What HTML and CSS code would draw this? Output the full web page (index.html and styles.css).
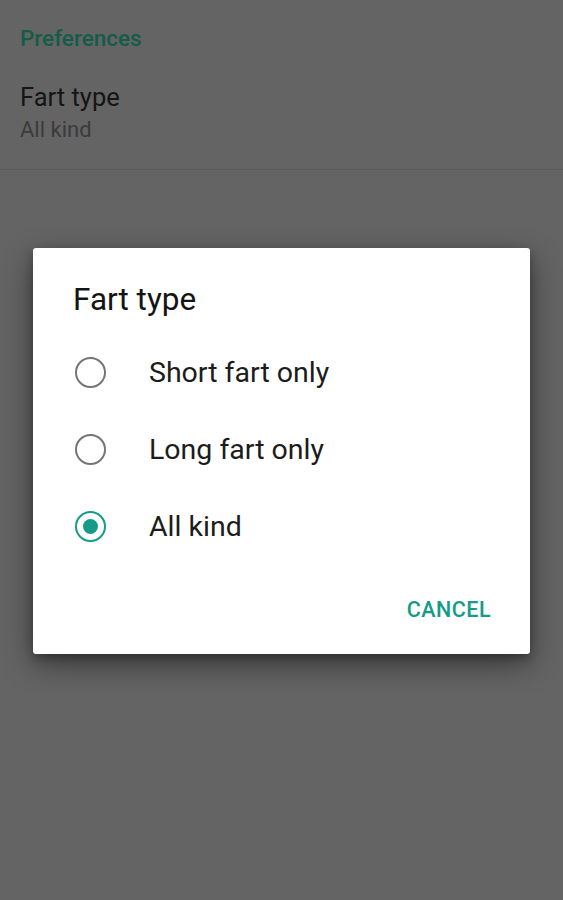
FILE: index.html
```html
<!DOCTYPE html>
<html>
<head>
<meta charset="utf-8">
<link rel="stylesheet" href="styles.css">
</head>
<body>
<div class="screen">
  <div class="category">Preferences</div>
  <div class="pref">
    <div class="pref-title">Fart type</div>
    <div class="pref-summary">All kind</div>
  </div>
  <div class="divider"></div>
</div>
<div class="scrim">
  <div class="dialog">
    <div class="dialog-title">Fart type</div>
    <div class="options">
      <div class="option">
        <span class="radio"></span>
        <span class="label">Short fart only</span>
      </div>
      <div class="option">
        <span class="radio"></span>
        <span class="label">Long fart only</span>
      </div>
      <div class="option">
        <span class="radio checked"></span>
        <span class="label">All kind</span>
      </div>
    </div>
    <div class="actions">
      <span class="button">CANCEL</span>
    </div>
  </div>
</div>
</body>
</html>
```

FILE: styles.css
```css
html, body {
  margin: 0;
  padding: 0;
  height: 100%;
}
body {
  background: #646464;
  font-family: Roboto, "Noto Sans", sans-serif;
  position: relative;
  overflow: hidden;
}
.screen {
  display: flex;
  flex-direction: column;
}
.category {
  color: #145c48;
  font-weight: 500;
  font-size: 22.5px;
  padding: 25px 20px 0;
  line-height: 26px;
}
.pref {
  padding: 31px 20px 0;
}
.pref-title {
  color: #151515;
  font-size: 25.5px;
  line-height: 30px;
}
.pref-summary {
  color: #3b3b3b;
  font-size: 22px;
  line-height: 28px;
  margin-top: 4px;
}
.divider {
  margin-top: 25px;
  height: 1px;
  background: #5a5a5a;
}
.scrim {
  position: absolute;
  inset: 0;
  display: flex;
  justify-content: flex-start;
  align-items: flex-start;
  padding: 248px 0 0 33px;
}
.dialog {
  width: 497px;
  height: 406px;
  background: #fff;
  border-radius: 3px;
  box-shadow: 0 10px 30px rgba(0,0,0,0.45), 0 4px 10px rgba(0,0,0,0.25);
  display: flex;
  flex-direction: column;
  box-sizing: border-box;
}
.dialog-title {
  color: #141414;
  font-size: 31.5px;
  font-weight: 400;
  padding: 34px 0 0 40px;
  line-height: 36px;
}
.options {
  display: flex;
  flex-direction: column;
  margin-top: 16px;
}
.option {
  display: flex;
  align-items: center;
  height: 77px;
  padding-left: 42px;
}
.radio {
  width: 27px;
  height: 27px;
  border: 2.5px solid #757575;
  border-radius: 50%;
  position: relative;
  flex: none;
}
.radio.checked {
  border-color: #169b89;
}
.radio.checked::after {
  content: "";
  position: absolute;
  left: 50%;
  top: 50%;
  width: 15px;
  height: 15px;
  margin: -7.5px 0 0 -7.5px;
  border-radius: 50%;
  background: #169b89;
}
.label {
  margin-left: 43px;
  color: #1c1c1c;
  font-size: 28.5px;
}
.actions {
  display: flex;
  justify-content: flex-end;
  padding: 32px 39px 0 0;
}
.button {
  color: #169b89;
  font-weight: 500;
  font-size: 21.5px;
  letter-spacing: 0.5px;
}
```
